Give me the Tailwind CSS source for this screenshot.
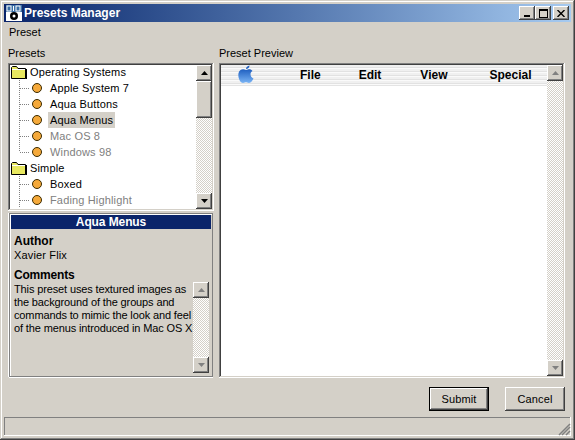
<!doctype html>
<html><head><meta charset="utf-8">
<script src="https://cdn.jsdelivr.net/npm/@tailwindcss/browser@4"></script>
</head>
<body class="m-0 bg-[#d4d0c8]">
<div class="w-[575px] h-[440px] overflow-hidden flex flex-col bg-[#d4d0c8] p-[4px] font-['Liberation_Sans',Arial,sans-serif] text-[11px] leading-[13px] text-black shadow-[inset_-1px_-1px_#404040,inset_1px_1px_#d4d0c8,inset_-2px_-2px_#808080,inset_2px_2px_#fff]">

  <div class="h-[18px] shrink-0 flex items-center bg-gradient-to-r from-[#0a246a] to-[#a6caf0] pr-[2px]">
    <svg class="ml-[2px] mr-[2px] shrink-0" width="16" height="16" viewBox="0 0 16 16"><rect width="16" height="16" fill="#fff"/><rect x="0" y="0" width="16" height="7" fill="#3a6ea5"/><rect x="1" y="1" width="4" height="5" fill="none" stroke="#fff"/><rect x="7" y="1" width="1" height="5" fill="#fff"/><rect x="10" y="1" width="4" height="5" fill="none" stroke="#fff"/><circle cx="8" cy="11" r="4" fill="#000"/><circle cx="8" cy="11" r="1.5" fill="#fff"/></svg>
    <span class="text-white font-bold text-[12px]">Presets Manager</span>
    <div class="ml-auto flex items-center">
      <div class="w-4 h-[14px] bg-[#d4d0c8] shadow-[inset_-1px_-1px_#404040,inset_1px_1px_#fff,inset_-2px_-2px_#808080] flex items-end justify-center pb-[3px] pr-[1px]"><div class="w-[6px] h-[2px] bg-black"></div></div>
      <div class="w-4 h-[14px] bg-[#d4d0c8] shadow-[inset_-1px_-1px_#404040,inset_1px_1px_#fff,inset_-2px_-2px_#808080] flex items-center justify-center"><div class="w-[9px] h-[9px] border border-black border-t-2"></div></div>
      <div class="ml-[2px] w-4 h-[14px] bg-[#d4d0c8] shadow-[inset_-1px_-1px_#404040,inset_1px_1px_#fff,inset_-2px_-2px_#808080] flex items-center justify-center"><svg width="8" height="7" viewBox="0 0 8 7"><path d="M0.5 0 L7.5 7 M7.5 0 L0.5 7" stroke="#000" stroke-width="1.4"/></svg></div>
    </div>
  </div>

  <div class="h-[20px] shrink-0 flex items-center pl-[5px]"><span>Preset</span></div>

  <div class="h-[21px] shrink-0 flex items-center pl-[4px] pt-[2px]">
    <span class="w-[211px]">Presets</span><span>Preset Preview</span>
  </div>

  <div class="h-[315px] shrink-0 flex pl-[4px] gap-[5px]">
    <div class="w-[206px] flex flex-col gap-[2px]">
      <div class="h-[148px] flex p-[2px] bg-white overflow-hidden shadow-[inset_-1px_-1px_#fff,inset_1px_1px_#808080,inset_-2px_-2px_#d4d0c8,inset_2px_2px_#404040]">
        <div class="flex-1 overflow-hidden -mt-[1px]">
          <div class="h-4 flex items-center pl-[1px] gap-[4px]">
            <svg width="16" height="13" viewBox="0 0 16 13"><path d="M0.5 12.500V1.500L1.500 .5H5.500L7 2.500H14.500V12.500Z" fill="#e8e860" stroke="#000"/><rect x="1" y="3" width="13" height="1" fill="#fff"/><path d="M15.500 3V13H1" fill="none" stroke="#000"/></svg>
            <span class="ml-[-1px] tracking-[0.15px]">Operating Systems</span>
          </div>
          <div class="h-4 flex items-center"><svg class="shrink-0" width="32" height="16" viewBox="0 0 32 16"><path d="M9.500 0V16M10 8.500H20" stroke="#808080" stroke-dasharray="1 1" fill="none"/><circle cx="27" cy="8" r="4.500" fill="#f5a93a" stroke="#3a2a00"/></svg><span class="ml-[8px] tracking-[0.15px]">Apple System 7</span></div>
          <div class="h-4 flex items-center"><svg class="shrink-0" width="32" height="16" viewBox="0 0 32 16"><path d="M9.500 0V16M10 8.500H20" stroke="#808080" stroke-dasharray="1 1" fill="none"/><circle cx="27" cy="8" r="4.500" fill="#f5a93a" stroke="#3a2a00"/></svg><span class="ml-[8px] tracking-[0.15px]">Aqua Buttons</span></div>
          <div class="h-4 flex items-center"><svg class="shrink-0" width="32" height="16" viewBox="0 0 32 16"><path d="M9.500 0V16M10 8.500H20" stroke="#808080" stroke-dasharray="1 1" fill="none"/><circle cx="27" cy="8" r="4.500" fill="#f5a93a" stroke="#3a2a00"/></svg><span class="ml-[6px] px-[2px] h-4 leading-[16px] bg-[#d4d0c8] tracking-[0.15px]">Aqua Menus</span></div>
          <div class="h-4 flex items-center text-[#808080]"><svg class="shrink-0" width="32" height="16" viewBox="0 0 32 16"><path d="M9.500 0V16M10 8.500H20" stroke="#808080" stroke-dasharray="1 1" fill="none"/><circle cx="27" cy="8" r="4.500" fill="#f5a93a" stroke="#3a2a00"/></svg><span class="ml-[8px] tracking-[0.15px]">Mac OS 8</span></div>
          <div class="h-4 flex items-center text-[#808080]"><svg class="shrink-0" width="32" height="16" viewBox="0 0 32 16"><path d="M9.500 0V8M10 8.500H20" stroke="#808080" stroke-dasharray="1 1" fill="none"/><circle cx="27" cy="8" r="4.500" fill="#f5a93a" stroke="#3a2a00"/></svg><span class="ml-[8px] tracking-[0.15px]">Windows 98</span></div>
          <div class="h-4 flex items-center pl-[1px] gap-[4px]">
            <svg width="16" height="13" viewBox="0 0 16 13"><path d="M0.5 12.500V1.500L1.500 .5H5.500L7 2.500H14.500V12.500Z" fill="#e8e860" stroke="#000"/><rect x="1" y="3" width="13" height="1" fill="#fff"/><path d="M15.500 3V13H1" fill="none" stroke="#000"/></svg>
            <span class="ml-[-1px] tracking-[0.15px]">Simple</span>
          </div>
          <div class="h-4 flex items-center"><svg class="shrink-0" width="32" height="16" viewBox="0 0 32 16"><path d="M9.500 0V16M10 8.500H20" stroke="#808080" stroke-dasharray="1 1" fill="none"/><circle cx="27" cy="8" r="4.500" fill="#f5a93a" stroke="#3a2a00"/></svg><span class="ml-[8px] tracking-[0.15px]">Boxed</span></div>
          <div class="h-4 flex items-center text-[#808080]"><svg class="shrink-0" width="32" height="16" viewBox="0 0 32 16"><path d="M9.500 0V16M10 8.500H20" stroke="#808080" stroke-dasharray="1 1" fill="none"/><circle cx="27" cy="8" r="4.500" fill="#f5a93a" stroke="#3a2a00"/></svg><span class="ml-[8px] tracking-[0.15px]">Fading Highlight</span></div>
        </div>
        <div class="w-4 shrink-0 flex flex-col bg-[repeating-conic-gradient(#d4d0c8_0_25%,#fff_0_50%)] bg-[length:2px_2px]">
          <div class="h-4 shrink-0 bg-[#d4d0c8] flex items-center justify-center shadow-[inset_-1px_-1px_#404040,inset_1px_1px_#fff,inset_-2px_-2px_#808080]"><svg width="7" height="4" viewBox="0 0 7 4"><path d="M3.500 0L7 4H0Z" fill="#000"/></svg></div>
          <div class="h-[37px] shrink-0 bg-[#d4d0c8] shadow-[inset_-1px_-1px_#404040,inset_1px_1px_#fff,inset_-2px_-2px_#808080]"></div>
          <div class="mt-auto h-4 shrink-0 bg-[#d4d0c8] flex items-center justify-center shadow-[inset_-1px_-1px_#404040,inset_1px_1px_#fff,inset_-2px_-2px_#808080]"><svg width="7" height="4" viewBox="0 0 7 4"><path d="M0 0H7L3.500 4Z" fill="#000"/></svg></div>
        </div>
      </div>

      <div class="flex-1 min-h-0 flex flex-col mx-[1px] mb-[1px] border border-[#808080] shadow-[-1px_0_#fff,0_1px_#fff,inset_1px_1px_#fff] px-[1px] pt-[1px] pb-[1px]">
        <div class="h-[14px] shrink-0 bg-[#0a246a] text-white font-bold text-[12px] leading-[14px] text-center -tracking-[0.1px]">Aqua Menus</div>
        <div class="pl-[3px] mt-[5px] font-bold text-[12px] leading-[14px]">Author</div>
        <div class="pl-[3px] mt-[1px] leading-[13px] tracking-[0.15px]">Xavier Flix</div>
        <div class="pl-[3px] mt-[6px] font-bold text-[12px] leading-[14px] -tracking-[0.2px]">Comments</div>
        <div class="flex-1 min-h-0 flex">
          <div class="w-[182px] pl-[3px] pt-[1px] leading-[13px] -tracking-[0.13px] whitespace-nowrap">This preset uses textured images as<br>the background of the groups and<br>commands to mimic the look and feel<br>of the menus introduced in Mac OS X</div>
          <div class="w-4 shrink-0 flex flex-col mb-[2px] bg-[repeating-conic-gradient(#d4d0c8_0_25%,#fff_0_50%)] bg-[length:2px_2px]">
            <div class="h-4 shrink-0 bg-[#d4d0c8] flex items-center justify-center shadow-[inset_-1px_-1px_#404040,inset_1px_1px_#fff,inset_-2px_-2px_#808080]"><svg width="7" height="4" viewBox="0 0 7 4"><path d="M3.500 0L7 4H0Z" fill="#808080"/></svg></div>
            <div class="mt-auto h-4 shrink-0 bg-[#d4d0c8] flex items-center justify-center shadow-[inset_-1px_-1px_#404040,inset_1px_1px_#fff,inset_-2px_-2px_#808080]"><svg width="7" height="4" viewBox="0 0 7 4"><path d="M0 0H7L3.500 4Z" fill="#808080"/></svg></div>
          </div>
        </div>
      </div>
    </div>

    <div class="w-[346px] flex p-[2px] bg-white shadow-[inset_-1px_-1px_#fff,inset_1px_1px_#808080,inset_-2px_-2px_#d4d0c8,inset_2px_2px_#404040]">
      <div class="flex-1">
        <div class="h-[21px] flex items-center font-bold text-[12px] bg-[repeating-linear-gradient(180deg,#f0f0f0_0_2px,#e2e2e2_2px_3px,#fafafa_3px_4px)] border-b border-[#e4e4e4]">
          <svg class="ml-[16px] shrink-0 -mt-[2px]" width="18" height="19" viewBox="0 0 18 19"><defs><linearGradient id="a" x1="0" y1="0" x2="0" y2="1"><stop offset="0" stop-color="#1f5fc0"/><stop offset="1" stop-color="#7ab4f5"/></linearGradient></defs><path d="M9 5C7 4 5 4 3.500 5C1.500 6.500 1 9 1.500 12C2 15 4 18 6 18C7.500 18 8 17.300 9 17.300C10 17.300 10.500 18 12 18C14 18 15.500 15.500 16.500 13.500C14.500 12.500 13.500 11 13.500 9C13.500 7.500 14.500 6.500 15.500 6C14.500 4.500 12.500 4 11 4.500C10.300 4.700 9.500 5.200 9 5Z" fill="url(#a)"/><path d="M9 4C9 2.500 10.500 .8 12.500 .5C12.500 2.500 11 4 9 4Z" fill="#1f5fc0"/></svg>
          <span class="ml-[45px]">File</span>
          <span class="ml-[38px]">Edit</span>
          <span class="ml-[39px]">View</span>
          <span class="ml-[42px]">Special</span>
        </div>
      </div>
      <div class="w-4 shrink-0 flex flex-col bg-[repeating-conic-gradient(#d4d0c8_0_25%,#fff_0_50%)] bg-[length:2px_2px]">
        <div class="h-4 shrink-0 bg-[#d4d0c8] flex items-center justify-center shadow-[inset_-1px_-1px_#404040,inset_1px_1px_#fff,inset_-2px_-2px_#808080]"><svg width="7" height="4" viewBox="0 0 7 4"><path d="M3.500 0L7 4H0Z" fill="#808080"/></svg></div>
        <div class="mt-auto h-4 shrink-0 bg-[#d4d0c8] flex items-center justify-center shadow-[inset_-1px_-1px_#404040,inset_1px_1px_#fff,inset_-2px_-2px_#808080]"><svg width="7" height="4" viewBox="0 0 7 4"><path d="M0 0H7L3.500 4Z" fill="#808080"/></svg></div>
      </div>
    </div>
  </div>

  <div class="h-[39px] shrink-0 flex items-start justify-end pt-[9px] pr-[6px] gap-[16px]">
    <button class="w-[60px] h-[24px] bg-[#d4d0c8] border border-black shadow-[inset_-1px_-1px_#404040,inset_1px_1px_#fff,inset_-2px_-2px_#808080] text-[11px] tracking-[0.15px]">Submit</button>
    <button class="w-[60px] h-[24px] bg-[#d4d0c8] shadow-[inset_-1px_-1px_#404040,inset_1px_1px_#fff,inset_-2px_-2px_#808080] text-[11px] tracking-[0.15px]">Cancel</button>
  </div>

  <div class="h-[19px] shrink-0 flex justify-end items-end overflow-hidden shadow-[inset_-1px_-1px_#fff,inset_1px_1px_#808080]">
    <svg width="13" height="13" viewBox="0 0 13 13"><path d="M12 1L1 12M12 4L4 12M12 8L8 12" stroke="#808080" stroke-width="1.5"/></svg>
  </div>
</div>
</body></html>
